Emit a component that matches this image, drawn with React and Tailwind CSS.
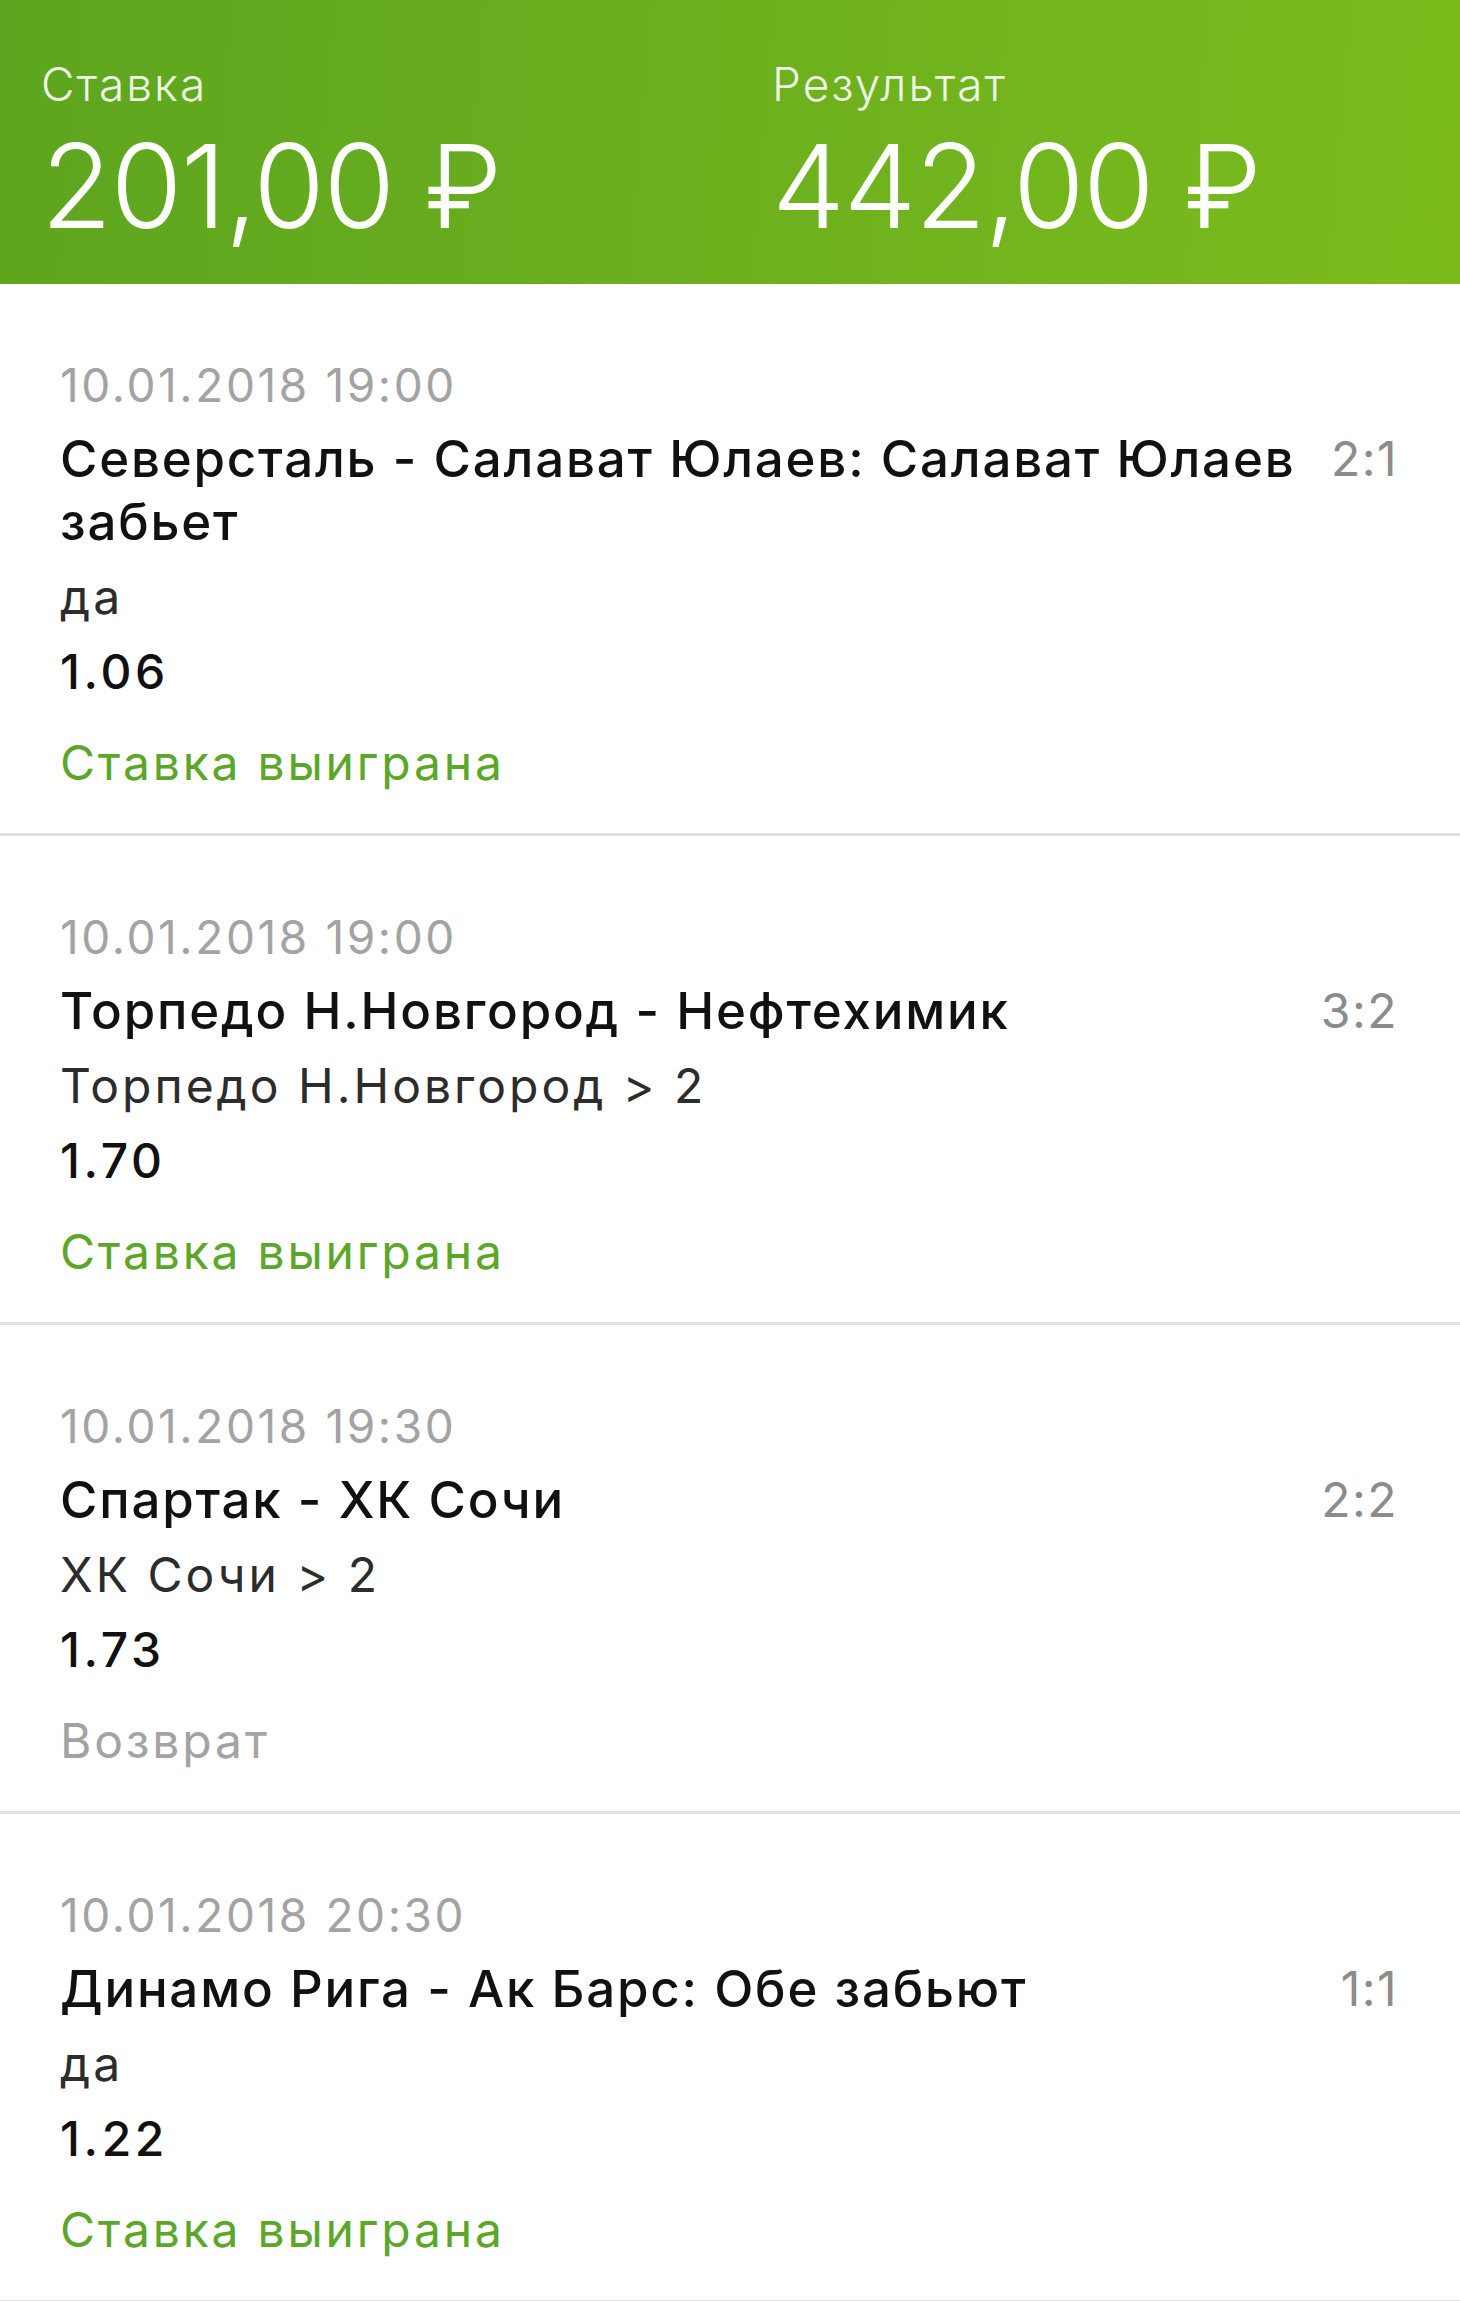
import React from "react";

const bets = [
  {
    date: "10.01.2018 19:00",
    title: "Северсталь - Салават Юлаев: Салават Юлаев забьет",
    score: "2:1",
    sub: "да",
    odds: "1.06",
    status: "Ставка выиграна",
    win: true,
  },
  {
    date: "10.01.2018 19:00",
    title: "Торпедо Н.Новгород - Нефтехимик",
    score: "3:2",
    sub: "Торпедо Н.Новгород > 2",
    odds: "1.70",
    status: "Ставка выиграна",
    win: true,
  },
  {
    date: "10.01.2018 19:30",
    title: "Спартак - ХК Сочи",
    score: "2:2",
    sub: "ХК Сочи > 2",
    odds: "1.73",
    status: "Возврат",
    win: false,
  },
  {
    date: "10.01.2018 20:30",
    title: "Динамо Рига - Ак Барс: Обе забьют",
    score: "1:1",
    sub: "да",
    odds: "1.22",
    status: "Ставка выиграна",
    win: true,
  },
];

function Bet({ b }) {
  return (
    <div className="flex flex-col pl-[60px] pr-[62px] pt-[70px] pb-[39px] border-b-[3px] border-[#e1e1e1]">
      <div className="text-[46px] leading-[63px] tracking-[2.6px] text-[#a3a3a3]">{b.date}</div>
      <div className="mt-[10px] flex items-start justify-between gap-[20px]">
        <div className="min-w-0 text-[51px] leading-[63px] tracking-[1.8px] font-medium text-[#111]">{b.title}</div>
        <div className="text-[48px] leading-[63px] tracking-[1.5px] text-[#8c8c8c] shrink-0">{b.score}</div>
      </div>
      <div className="mt-[12px] text-[48px] leading-[63px] tracking-[3px] text-[#2c2c2c]">{b.sub}</div>
      <div className="mt-[12px] text-[48px] leading-[63px] tracking-[3.6px] font-medium text-[#111]">{b.odds}</div>
      <div
        className={
          "mt-[28px] text-[48px] leading-[63px] tracking-[2.8px] " +
          (b.win ? "text-[#5ca62a]" : "text-[#a3a3a3]")
        }
      >
        {b.status}
      </div>
    </div>
  );
}

export default function App() {
  return (
    <div className="w-[1460px] min-h-[2301px] bg-white font-['Inter','Noto_Sans',sans-serif]">
      <div className="h-[284px] bg-[linear-gradient(95deg,#5ea51f_0%,#6cb01e_50%,#7bbc1c_100%)] flex pl-[41px] pt-[56px] text-white">
        <div className="w-[731px] flex flex-col">
          <div className="text-[46px] leading-[56px] font-light tracking-[2px] text-[#eef6e6]">Ставка</div>
          <div className="mt-[16px] text-[116px] leading-[116px] font-light tracking-[-1.5px]">201,00 ₽</div>
        </div>
        <div className="flex flex-col">
          <div className="text-[46px] leading-[56px] font-light tracking-[2px] text-[#eef6e6]">Результат</div>
          <div className="mt-[16px] text-[116px] leading-[116px] font-light tracking-[-1.5px]">442,00 ₽</div>
        </div>
      </div>
      <div className="flex flex-col">
        {bets.map((b, i) => (
          <Bet key={i} b={b} />
        ))}
      </div>
    </div>
  );
}
